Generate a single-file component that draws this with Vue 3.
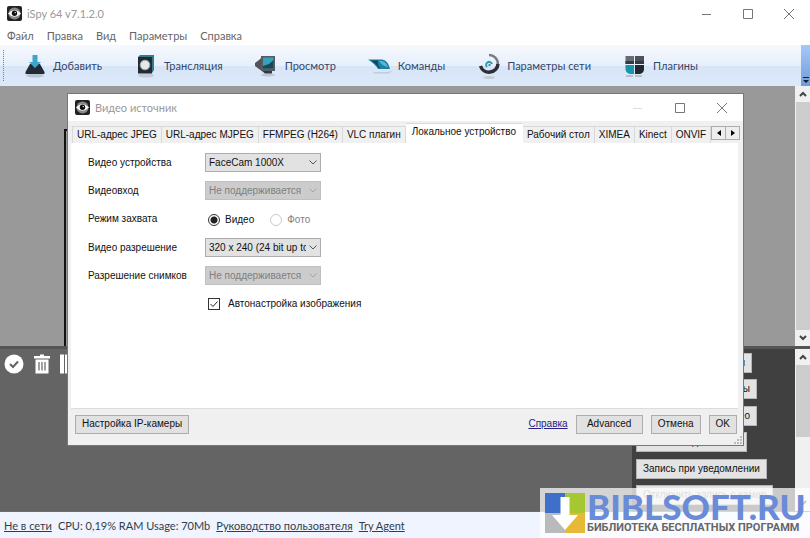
<script setup>
import { ref } from 'vue'

const menu = ['Файл', 'Правка', 'Вид', 'Параметры', 'Справка']
const tools = [
  { id: 'add', label: 'Добавить' },
  { id: 'cast', label: 'Трансляция' },
  { id: 'view', label: 'Просмотр' },
  { id: 'cmd', label: 'Команды' },
  { id: 'net', label: 'Параметры сети' },
  { id: 'plug', label: 'Плагины' },
]
const tabs = [
  'URL-адрес JPEG',
  'URL-адрес MJPEG',
  'FFMPEG (H264)',
  'VLC плагин',
  'Локальное устройство',
  'Рабочий стол',
  'XIMEA',
  'Kinect',
  'ONVIF',
]
const activeTab = ref(4)
const mode = ref('video')
const auto = ref(true)
const actions = [
  { label: 'Записи', size: 'w-m' },
  { label: 'Камеры', size: 'w-l' },
  { label: 'Видео', size: 'w-l' },
  { label: 'Запись по движению', size: '' },
  { label: 'Запись при уведомлении', size: '' },
  { label: 'Отключить запись с камер', size: '', disabled: true },
]
</script>

<template>
  <div class="app">
    <header class="titlebar">
      <svg class="eye" viewBox="0 0 15 15">
        <rect width="15" height="15" rx="2" fill="#222" />
        <circle cx="7.5" cy="7.5" r="6" fill="#888" />
        <path d="M1 7.5Q7.5 .5 14 7.5Q7.500 14 1 7.5Z" fill="#fff" />
        <circle cx="7.5" cy="7.3" r="2.7" fill="#111" />
        <circle cx="8.3" cy="6.6" r=".7" fill="#fff" />
      </svg>
      <h1>iSpy 64 v7.1.2.0</h1>
      <div class="winbtns">
        <button aria-label="Свернуть"><svg viewBox="0 0 10 10"><path d="M0 5.5H9" /></svg></button>
        <button aria-label="Развернуть"><svg viewBox="0 0 10 10"><path d="M.5 .5H9.500V9.500H.5Z" /></svg></button>
        <button aria-label="Закрыть"><svg viewBox="0 0 10 10"><path d="M0 0L10 10M10 0L0 10" /></svg></button>
      </div>
    </header>

    <nav class="menu">
      <button v-for="m in menu" :key="m">{{ m }}</button>
    </nav>

    <div class="toolbar">
      <span class="grip"></span>
      <div class="tools">
        <button v-for="t in tools" :key="t.id">
          <svg v-if="t.id === 'add'" viewBox="0 0 28 28">
            <ellipse cx="14" cy="23.500" rx="9" ry="2" fill="#b9c4d3" />
            <path d="M9 12H19L23.500 20V22H4.500V20Z" fill="#1f2b36" />
            <path d="M11.500 3H16.500V10H20L14 16L8 10H11.500Z" fill="#3ea5cc" />
          </svg>
          <svg v-else-if="t.id === 'cast'" viewBox="0 0 28 28">
            <ellipse cx="14" cy="23.500" rx="8" ry="2" fill="#c2ccd9" />
            <path d="M8 3H22V18L20 21V5H6Z" fill="#2f7d87" />
            <rect x="6" y="5" width="14" height="16.500" fill="#252a32" />
            <circle cx="13" cy="13" r="4.800" fill="#e4e8ea" />
            <circle cx="13" cy="13" r="4.800" fill="none" stroke="#9aa" />
          </svg>
          <svg v-else-if="t.id === 'view'" viewBox="0 0 28 28">
            <ellipse cx="15" cy="23" rx="7" ry="1.500" fill="#bcc5d0" />
            <path d="M2 11L6 8L9 5V19L6 17L2 14Z" fill="#50555b" />
            <path d="M8 4H22V19H8Z" fill="#555b62" />
            <path d="M10 5.500H20.500V16.500H10Z" fill="#34a3c0" />
            <path d="M10 16.500V14L16 12L20.500 8V16.500Z" fill="#1e4450" />
            <path d="M9 19H19V21.500H12Z" fill="#34383d" />
          </svg>
          <svg v-else-if="t.id === 'cmd'" viewBox="0 0 28 28">
            <path d="M7 20H22L27 18.500L23 21.500H8Z" fill="#c5cbd4" />
            <path d="M2 7.500H16Q22 8 24 17H12Q9 12 2 7.500Z" fill="#1d80a5" />
            <path d="M5 8.500H12Q11 12 14 16H13Q10 11.500 5 8.500Z" fill="#174354" />
            <path d="M13 9H16Q20 10 22 15Q16 14 13 9Z" fill="#55b8d8" />
          </svg>
          <svg v-else-if="t.id === 'net'" viewBox="0 0 28 28">
            <ellipse cx="14" cy="25.500" rx="6" ry="1.500" fill="#c2ccd8" />
            <path d="M14 3A9 9 0 0 1 23 12" fill="none" stroke="#777d86" stroke-width="2.500" />
            <path d="M23 12A9 9 0 0 1 5.500 14" fill="none" stroke="#2c3036" stroke-width="3.500" />
            <path d="M12 15A3 3 0 1 1 17 12" fill="none" stroke="#2c9ab0" stroke-width="2" />
            <circle cx="14.500" cy="13" r="1.200" fill="#2c9ab0" />
          </svg>
          <svg v-else viewBox="0 0 28 28">
            <path d="M5 24H23" stroke="#b7c0cb" stroke-width="2" stroke-dasharray="7 2" />
            <path d="M4.500 4H13V12H4.500Z" fill="#666c74" />
            <path d="M14 4H23V12H14Z" fill="#4d525a" />
            <path d="M4.500 13H13V22H9Q4.500 21 4.500 17Z" fill="#1995ab" />
            <path d="M14 13H23V17Q23 21 19 22H14Z" fill="#22262d" />
            <path d="M4.500 9H13V12H4.500ZM14 9H23V12H14Z" fill="#333941" />
          </svg>
          <span>{{ t.label }}</span>
        </button>
      </div>
      <button class="overflow" aria-label="Ещё">
        <svg viewBox="0 0 6 6"><path d="M0 0H6V1H0ZM0 3H6L3 6Z" fill="#123" /></svg>
      </button>
    </div>

    <main class="workspace">
      <div class="canvas"><div class="camera"></div></div>
      <div class="scroll">
        <button aria-label="Вверх"><svg viewBox="0 0 8 6"><path d="M1 5L4 2L7 5" /></svg></button>
        <i class="thumb"></i>
        <button aria-label="Вниз"><svg viewBox="0 0 8 6"><path d="M1 1L4 4L7 1" /></svg></button>
      </div>
    </main>

    <section class="lower">
      <div class="media">
        <button aria-label="Выбрать">
          <svg viewBox="0 0 20 20"><circle cx="10" cy="10" r="9.500" fill="#fff" /><path d="M6 10L9 13L14 7.500" fill="none" stroke="#646464" stroke-width="2" /></svg>
        </button>
        <button aria-label="Удалить">
          <svg viewBox="0 0 20 20"><path d="M2 2H8V.5H12V2H18V4.500H2ZM3.500 5.500H16.500V19.500H3.500Z" fill="#fff" /><path d="M7 8V16.500M10 8V16.500M13 8V16.500" stroke="#646464" stroke-width="1.200" /></svg>
        </button>
        <button aria-label="Список">
          <svg viewBox="0 0 20 20"><path d="M0 .5H4V19.500H0ZM5 .5H18V19.500H5Z" fill="#fff" /></svg>
        </button>
      </div>
      <div class="actions">
        <button v-for="a in actions" :key="a.label" :class="a.size" :disabled="a.disabled">{{ a.label }}</button>
      </div>
      <div class="scroll">
        <button aria-label="Вверх"><svg viewBox="0 0 8 6"><path d="M1 5L4 2L7 5" /></svg></button>
        <i class="thumb short"></i>
        <button aria-label="Вниз"><svg viewBox="0 0 8 6"><path d="M1 1L4 4L7 1" /></svg></button>
      </div>
    </section>

    <footer class="status">
      <a href="#">Не в сети</a>
      <span>CPU: 0,19% RAM Usage: 70Mb</span>
      <a href="#">Руководство пользователя</a>
      <a href="#">Try Agent</a>
    </footer>

    <div class="dialog" role="dialog" aria-labelledby="dlg-title">
      <header class="dlg-title">
        <svg class="eye" viewBox="0 0 15 15">
          <rect width="15" height="15" rx="2" fill="#222" />
          <circle cx="7.5" cy="7.5" r="6" fill="#888" />
          <path d="M1 7.5Q7.5 .5 14 7.5Q7.500 14 1 7.5Z" fill="#fff" />
          <circle cx="7.5" cy="7.3" r="2.7" fill="#111" />
          <circle cx="8.3" cy="6.6" r=".7" fill="#fff" />
        </svg>
        <h2 id="dlg-title">Видео источник</h2>
        <div class="winbtns">
          <button class="faint" aria-label="Свернуть"><svg viewBox="0 0 10 10"><path d="M0 5.5H9" /></svg></button>
          <button aria-label="Развернуть"><svg viewBox="0 0 10 10"><path d="M.5 .5H9.500V9.500H.5Z" /></svg></button>
          <button aria-label="Закрыть"><svg viewBox="0 0 10 10"><path d="M0 0L10 10M10 0L0 10" /></svg></button>
        </div>
      </header>

      <div class="tabrow">
        <div class="tabs" role="tablist">
          <button
            v-for="(t, i) in tabs"
            :key="t"
            role="tab"
            :aria-selected="activeTab === i"
            :class="{ active: activeTab === i }"
            @click="activeTab = i"
          >{{ t }}</button>
        </div>
        <div class="spin">
          <button aria-label="Назад"><svg viewBox="0 0 4 6"><path d="M4 0V6L0 3Z" /></svg></button>
          <button aria-label="Вперёд"><svg viewBox="0 0 4 6"><path d="M0 0V6L4 3Z" /></svg></button>
        </div>
      </div>

      <form class="page" @submit.prevent>
        <label for="dev">Видео устройства</label>
        <div class="combo">
          <select id="dev"><option>FaceCam 1000X</option></select>
          <svg viewBox="0 0 8 5"><path d="M.5 .5L4 4L7.500 .5" /></svg>
        </div>
        <label for="inp">Видеовход</label>
        <div class="combo off">
          <select id="inp" disabled><option>Не поддерживается</option></select>
          <svg viewBox="0 0 8 5"><path d="M.5 .5L4 4L7.500 .5" /></svg>
        </div>
        <span id="mode-label">Режим захвата</span>
        <div class="choices" role="radiogroup" aria-labelledby="mode-label">
          <label><input v-model="mode" type="radio" name="mode" value="video" />Видео</label>
          <label class="off"><input v-model="mode" type="radio" name="mode" value="photo" disabled />Фото</label>
        </div>
        <label for="res">Видео разрешение</label>
        <div class="combo">
          <select id="res"><option>320 x 240 (24 bit up to 30 fps)</option></select>
          <svg viewBox="0 0 8 5"><path d="M.5 .5L4 4L7.500 .5" /></svg>
        </div>
        <label for="snap">Разрешение снимков</label>
        <div class="combo off">
          <select id="snap" disabled><option>Не поддерживается</option></select>
          <svg viewBox="0 0 8 5"><path d="M.5 .5L4 4L7.500 .5" /></svg>
        </div>
        <div class="choices second">
          <label>
            <span class="tick">
              <input v-model="auto" type="checkbox" />
              <svg v-if="auto" viewBox="0 0 12 12"><path d="M2.500 6L5 8.500L9.500 3.500" /></svg>
            </span>Автонастройка изображения
          </label>
        </div>
      </form>

      <footer class="dlg-foot">
        <button>Настройка IP-камеры</button>
        <a href="#">Справка</a>
        <button class="wide">Advanced</button>
        <button>Отмена</button>
        <button>OK</button>
      </footer>
      <svg class="sizer" viewBox="0 0 8 8"><path d="M6 0H8V2H6ZM3 3H5V5H3ZM6 3H8V5H6ZM0 6H2V8H0ZM3 6H5V8H3ZM6 6H8V8H6Z" fill="#bbb" /></svg>
    </div>

    <aside class="mark">
      <svg viewBox="0 0 40 40">
        <path d="M0 0H20V20H0Z" fill="#3d6fcb" />
        <path d="M20 0H40V20H20Z" fill="#a5c832" />
        <path d="M0 20H20V40H0Z" fill="#b9babc" />
        <path d="M20 20H40V40H20Z" fill="#e6b936" />
        <path d="M15.500 4H24.500V22H33L20 37L7 22H15.500Z" fill="#fff" />
      </svg>
      <div class="mark-text">
        <strong>BIBLSOFT.RU</strong>
        <span>БИБЛИОТЕКА БЕСПЛАТНЫХ ПРОГРАММ</span>
      </div>
    </aside>
  </div>
</template>

<style>
body {
  margin: 0;
}
</style>

<style scoped>
* {
  box-sizing: border-box;
}
.app {
  position: relative;
  display: flex;
  flex-direction: column;
  min-height: 100vh;
  overflow: hidden;
  background: #fff;
  font: 11px/14px Lato, sans-serif;
  color: #666;
}
button {
  margin: 0;
  padding: 0;
  border: 0;
  background: none;
  font: inherit;
  color: inherit;
  white-space: nowrap;
}
svg {
  display: block;
}
h1,
h2 {
  margin: 0;
  font-size: 11px;
  font-weight: 400;
  color: #999;
}
.titlebar {
  display: flex;
  align-items: center;
  gap: 5px;
  height: 27px;
  padding: 0 16px 0 7px;
}
.eye {
  width: 15px;
  height: 15px;
}
.winbtns {
  display: flex;
  gap: 32px;
  margin-left: auto;
}
.titlebar .winbtns {
  gap: 31px;
}
.winbtns svg {
  width: 10px;
  height: 10px;
  overflow: visible;
  fill: none;
  stroke: #777;
}
.winbtns .faint {
  opacity: 0.25;
}
.menu {
  display: flex;
  gap: 13px;
  height: 18px;
  padding: 0 7px;
}
.toolbar {
  display: flex;
  height: 41px;
  background: linear-gradient(#f6f9fe, #e6effb 50%, #d8e5f6 51%, #dbe9fa);
  color: #33476b;
}
.grip {
  width: 1px;
  margin: 5px 17px 5px 3px;
  border-left: 1px dotted #6681a8;
}
.tools {
  display: flex;
  flex: 1;
  gap: 30px;
}
.tools button {
  display: flex;
  align-items: center;
  gap: 4px;
}
.tools svg {
  width: 28px;
  height: 28px;
}
.overflow {
  display: flex;
  align-items: flex-end;
  justify-content: center;
  width: 9px;
  padding-bottom: 3px;
  background: linear-gradient(#a5c8fa, #6f9ddb);
}
.overflow svg {
  width: 6px;
  height: 6px;
}
.workspace {
  display: flex;
  flex: 1;
  background: #999;
}
.canvas {
  display: flex;
  flex: 1;
  padding: 43px 80px 0 64px;
}
.camera {
  flex: 1;
  border: 2px solid #111;
  border-bottom: 0;
}
.scroll {
  display: flex;
  flex-direction: column;
  width: 15px;
  background: #f0f0f0;
}
.scroll button {
  display: flex;
  align-items: center;
  justify-content: center;
  height: 16px;
}
.scroll svg {
  width: 8px;
  height: 6px;
  fill: none;
  stroke: #444;
  stroke-width: 2;
}
.thumb {
  flex: 1;
  margin-left: 1px;
  background: #cdcdcd;
}
.thumb.short {
  flex: none;
  height: 72px;
  margin-bottom: auto;
}
.lower {
  display: flex;
  border-top: 3px solid #555;
  border-bottom: 1px solid #6a6a78;
  background: #646464;
}
.media {
  display: flex;
  flex: 1;
  align-items: flex-start;
  gap: 8px;
  padding: 5px 4px;
}
.media svg {
  width: 20px;
  height: 20px;
}
.actions {
  display: flex;
  flex-direction: column;
  align-items: flex-start;
  gap: 6px;
  width: 163px;
  padding: 4px 3px 5px 4px;
  background: #404040;
  font: 10px/14px "Liberation Sans", sans-serif;
  color: #111;
}
.actions button {
  height: 20px;
  padding: 0 6px;
  border: 1px solid #b5b5b5;
  background: #e3e3e3;
}
.actions button:nth-child(even) {
  margin-bottom: 1px;
}
.actions .w-m,
.actions .w-l {
  width: 116px;
  text-align: right;
}
.actions .w-l {
  width: 121px;
}
.actions button:disabled {
  color: #888;
}
.status {
  display: flex;
  align-items: center;
  gap: 6px;
  height: 26px;
  padding: 2px 4px 0;
  background: #eff4fe;
  color: #333c4c;
}
.status a {
  color: inherit;
}
.dialog {
  position: absolute;
  inset: 94px 67px 93px 68px;
  display: flex;
  flex-direction: column;
  outline: 1px solid #777;
  background: #f0f0f0;
  font: 10px/14px "Liberation Sans", sans-serif;
  color: #111;
}
.dlg-title {
  display: flex;
  align-items: center;
  gap: 5px;
  height: 27px;
  padding: 0 16px 0 7px;
  background: #fff;
  font-family: Lato, sans-serif;
}
.tabrow {
  display: flex;
  align-items: flex-end;
  height: 22px;
  padding: 0 3px 0 4px;
}
.tabs {
  display: flex;
  flex: 1;
  align-items: flex-end;
  min-width: 0;
  overflow: hidden;
}
.tabs button {
  height: 17px;
  padding: 0 4px;
  border: 1px solid #d9d9d9;
  border-width: 1px 1px 0 0;
}
.tabs button:first-child {
  border-left-width: 1px;
}
.tabs .active {
  height: 20px;
  padding: 0 6px 3px;
  border-right-color: #fff;
  background: #fff;
}
.spin {
  display: flex;
  margin-bottom: 3px;
}
.spin button {
  display: flex;
  align-items: center;
  justify-content: center;
  width: 15px;
  height: 14px;
  border: 1px solid #adadad;
  background: #eee;
}
.spin button + button {
  margin-left: -1px;
}
.spin svg {
  width: 4px;
  height: 6px;
}
.page {
  display: grid;
  flex: 1;
  grid-template-columns: 117px 1fr;
  grid-template-rows: 19px 19px 20px 19px 19px 20px;
  align-items: center;
  align-content: start;
  row-gap: 9px;
  margin: 0 5px 0 3px;
  padding: 10px 0 0 17px;
  border-bottom: 1px solid #ddd;
  background: #fff;
}
.combo {
  display: grid;
  align-items: center;
  width: 116px;
  height: 19px;
}
.combo select,
.combo svg {
  grid-area: 1 / 1;
}
.combo select {
  width: 100%;
  height: 19px;
  padding: 0 14px 0 3px;
  border: 1px solid #adadad;
  border-radius: 0;
  background: #e2e2e2;
  font: inherit;
  color: #111;
  appearance: none;
}
.combo svg {
  justify-self: end;
  width: 8px;
  height: 5px;
  margin-right: 4px;
  fill: none;
  stroke: #555;
  pointer-events: none;
}
.combo.off select {
  border-color: #bfbfbf;
  background: #ccc;
  color: #808080;
  opacity: 1;
}
.combo.off svg {
  stroke: #a5a5a5;
}
.choices {
  display: flex;
  gap: 16px;
  padding: 2px 0 0 3px;
}
.choices.second {
  grid-column: 2;
  padding-top: 0;
}
.choices label {
  display: flex;
  align-items: center;
  gap: 5px;
}
.choices label.off {
  color: #808080;
}
.choices.second label {
  gap: 8px;
}
.choices input {
  width: 12px;
  height: 12px;
  margin: 0;
  border: 1px solid #333;
  background: #fff;
  appearance: none;
}
.choices input[type="radio"] {
  border-radius: 50%;
}
.choices input[type="radio"]:checked {
  background: radial-gradient(circle, #222 3px, #fff 4px);
}
.choices input:disabled {
  border-color: #ccc;
}
.tick {
  display: grid;
}
.tick input,
.tick svg {
  grid-area: 1 / 1;
  width: 12px;
  height: 12px;
}
.tick svg {
  fill: none;
  stroke: #222;
  pointer-events: none;
}
.dlg-foot {
  display: flex;
  align-items: center;
  gap: 8px;
  height: 36px;
  padding: 0 6px 6px 7px;
}
.dlg-foot button {
  height: 19px;
  padding: 0 6px;
  border: 1px solid #adadad;
  background: #e1e1e1;
}
.dlg-foot .wide {
  width: 67px;
}
.dlg-foot a {
  margin-left: auto;
  color: #22228a;
}
.sizer {
  position: absolute;
  right: 1px;
  bottom: 1px;
  width: 8px;
  height: 8px;
}
.mark {
  position: absolute;
  right: 0;
  bottom: 0;
  display: flex;
  align-items: center;
  gap: 2px;
  width: 270px;
  height: 50px;
  padding: 0 5px;
  background: rgba(255, 255, 255, 0.72);
}
.mark svg {
  flex: none;
  width: 40px;
  height: 40px;
}
.mark-text {
  display: flex;
  flex-direction: column;
  white-space: nowrap;
}
.mark strong {
  font: 900 35px/29px Lato, sans-serif;
  color: #6a8bd8;
}
.mark span {
  font: 700 11px/14px Roboto, sans-serif;
  color: #666;
}
</style>
